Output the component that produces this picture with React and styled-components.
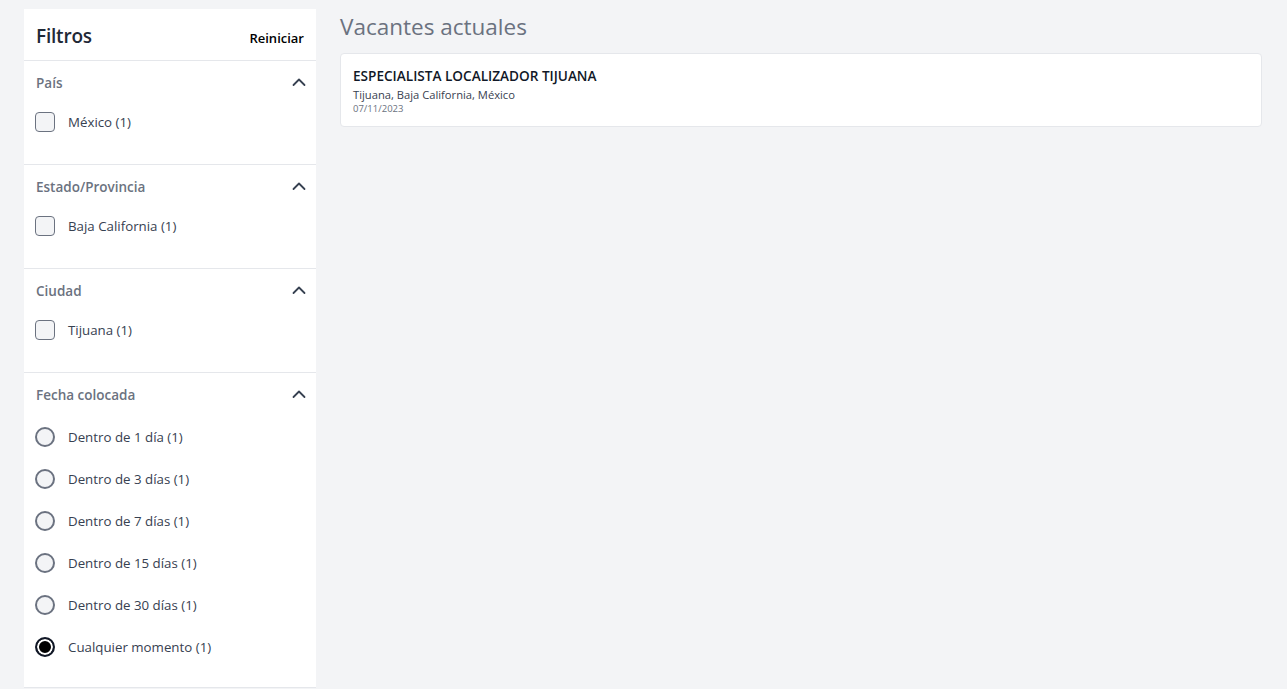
import React from "react";
import styled, { createGlobalStyle } from "styled-components";

const Global = createGlobalStyle`
  * { box-sizing: border-box; }
  html, body { margin: 0; padding: 0; background: #f3f4f6; }
  body { font-family: "Open Sans", "Noto Sans", sans-serif; color: #111827; }
`;

const Page = styled.div`
  display: flex;
  align-items: flex-start;
  gap: 24px;
  padding: 9px 25px 0 24px;
  min-height: 689px;
`;

const Sidebar = styled.aside`
  width: 292px;
  flex-shrink: 0;
  background: #fff;
`;

const SidebarHeader = styled.div`
  display: flex;
  align-items: center;
  justify-content: space-between;
  height: 52px;
  padding: 2px 12px 0 12px;
  border-bottom: 1px solid #e5e7eb;
`;

const SidebarTitle = styled.h2`
  margin: 0;
  font-size: 19px;
  font-weight: 600;
  color: #1f2937;
  letter-spacing: -0.2px;
`;

const ResetButton = styled.button`
  background: none;
  border: none;
  padding: 0;
  margin-top: 4px;
  font-family: inherit;
  font-size: 13px;
  font-weight: 600;
  color: #000;
  cursor: pointer;
`;

const Section = styled.section`
  display: flex;
  flex-direction: column;
  padding: 12px 12px 21px 12px;
  border-bottom: 1px solid #e5e7eb;
`;

const SectionHeader = styled.div`
  display: flex;
  align-items: center;
  justify-content: space-between;
  height: 20px;
  margin-bottom: 8px;
`;

const SectionTitle = styled.span`
  font-size: 13.5px;
  font-weight: 600;
  color: #6b7280;
`;

const Chevron = styled.svg`
  width: 14px;
  height: 14px;
  margin-right: -2px;
  margin-top: -2px;
`;

const OptionList = styled.div`
  display: flex;
  flex-direction: column;
  margin: ${(p) => (p.$radio ? "3px 0 -2px -1px" : "0 0 0 -1px")};
`;

const Option = styled.label`
  display: flex;
  align-items: center;
  gap: 13px;
  height: 42px;
  font-size: 13.3px;
  color: #374151;
`;

const Checkbox = styled.span`
  width: 20px;
  height: 20px;
  border: 1px solid #6b7280;
  border-radius: 4px;
  background: #f3f4f6;
  flex-shrink: 0;
`;

const Radio = styled.span`
  width: 20px;
  height: 20px;
  border-radius: 50%;
  border: 2px solid ${(p) => (p.$checked ? "#111827" : "#6b7280")};
  background: ${(p) => (p.$checked ? "#000" : "#f3f4f6")};
  box-shadow: ${(p) => (p.$checked ? "inset 0 0 0 2px #fff" : "none")};
  flex-shrink: 0;
`;

const Main = styled.main`
  flex: 1;
  display: flex;
  flex-direction: column;
`;

const PageTitle = styled.h1`
  margin: 0;
  height: 44px;
  font-size: 22.5px;
  font-weight: 400;
  line-height: 36px;
  color: #6b7280;
`;

const Card = styled.div`
  background: #fff;
  border: 1px solid #e5e7eb;
  border-radius: 4px;
  padding: 13px 12px 11px 12px;
  height: 74px;
`;

const JobTitle = styled.div`
  font-size: 13.6px;
  font-weight: 600;
  color: #111827;
  line-height: 18px;
`;

const JobLocation = styled.div`
  font-size: 11.2px;
  color: #374151;
  line-height: 17px;
  padding-top: 1px;
`;

const JobDate = styled.div`
  font-size: 9.5px;
  color: #6b7280;
  line-height: 12px;
`;

const Up = () => (
  <Chevron viewBox="0 0 14 14" fill="none">
    <path d="M1.5 10 L7 4.5 L12.5 10" stroke="#374151" strokeWidth="1.8" strokeLinecap="round" strokeLinejoin="round" />
  </Chevron>
);

const FilterSection = ({ title, children }) => (
  <Section>
    <SectionHeader>
      <SectionTitle>{title}</SectionTitle>
      <Up />
    </SectionHeader>
    {children}
  </Section>
);

const dates = [
  "Dentro de 1 día (1)",
  "Dentro de 3 días (1)",
  "Dentro de 7 días (1)",
  "Dentro de 15 días (1)",
  "Dentro de 30 días (1)",
  "Cualquier momento (1)",
];

export default function App() {
  return (
    <>
      <Global />
      <Page>
        <Sidebar>
          <SidebarHeader>
            <SidebarTitle>Filtros</SidebarTitle>
            <ResetButton>Reiniciar</ResetButton>
          </SidebarHeader>
          <FilterSection title="País">
            <OptionList><Option><Checkbox />México (1)</Option></OptionList>
          </FilterSection>
          <FilterSection title="Estado/Provincia">
            <OptionList><Option><Checkbox />Baja California (1)</Option></OptionList>
          </FilterSection>
          <FilterSection title="Ciudad">
            <OptionList><Option><Checkbox />Tijuana (1)</Option></OptionList>
          </FilterSection>
          <FilterSection title="Fecha colocada">
            <OptionList $radio>
              {dates.map((d, i) => (
                <Option key={d}>
                  <Radio $checked={i === dates.length - 1} />
                  {d}
                </Option>
              ))}
            </OptionList>
          </FilterSection>
        </Sidebar>
        <Main>
          <PageTitle>Vacantes actuales</PageTitle>
          <Card>
            <JobTitle>ESPECIALISTA LOCALIZADOR TIJUANA</JobTitle>
            <JobLocation>Tijuana, Baja California, México</JobLocation>
            <JobDate>07/11/2023</JobDate>
          </Card>
        </Main>
      </Page>
    </>
  );
}
